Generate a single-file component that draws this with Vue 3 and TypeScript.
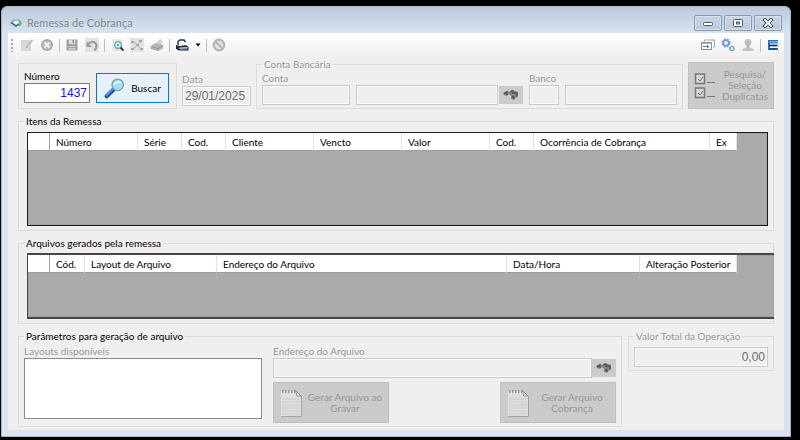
<script setup lang="ts">
import { ref } from 'vue'

interface Column {
  title: string
  width: number
}

const itemColumns: Column[] = [
  { title: '', width: 22 },
  { title: 'Número', width: 88 },
  { title: 'Série', width: 44 },
  { title: 'Cod.', width: 44 },
  { title: 'Cliente', width: 88 },
  { title: 'Vencto', width: 88 },
  { title: 'Valor', width: 88 },
  { title: 'Cod.', width: 44 },
  { title: 'Ocorrência de Cobrança', width: 176 },
  { title: 'Ex', width: 27 },
]

const fileColumns: Column[] = [
  { title: '', width: 22 },
  { title: 'Cód.', width: 35 },
  { title: 'Layout de Arquivo', width: 132 },
  { title: 'Endereço do Arquivo', width: 290 },
  { title: 'Data/Hora', width: 133 },
  { title: 'Alteração Posterior', width: 97 },
]

const numero = ref('1437')
const data = ref('29/01/2025')
const total = ref('0,00')
</script>

<template>
  <div class="desktop">
    <main class="window">
      <header class="titlebar">
        <svg class="app-icon" viewBox="0 0 12 12">
          <path d="M1 5.5 4 3h5l2 2" fill="none" stroke="#7fa9c4" stroke-width="1.2" />
          <path d="M1 5.5 6 9l3-2" fill="none" stroke="#3e6d8c" stroke-width="1.6" />
          <path d="M8.5 4 11 6.5 9 9" fill="none" stroke="#5fc04c" stroke-width="1.8" />
          <path d="M3 5.5 5 4h3l1 1.5L6 7.5z" fill="#eaf5fb" />
        </svg>
        <h1>Remessa de Cobrança</h1>
        <div class="caption-buttons">
          <button type="button" aria-label="Minimizar">
            <svg viewBox="0 0 12 10"><rect x="1.5" y="4.5" width="9" height="3" rx="1" fill="#fff" stroke="#4b5566" /></svg>
          </button>
          <button type="button" aria-label="Maximizar">
            <svg viewBox="0 0 12 10">
              <rect x="1.5" y="1.5" width="9" height="7" rx="1" fill="#fff" stroke="#4b5566" />
              <rect x="4.5" y="4" width="3" height="2" fill="#b9c8da" stroke="#4b5566" />
            </svg>
          </button>
          <button type="button" aria-label="Fechar">
            <svg viewBox="0 0 12 10">
              <path d="M3 2l6 6M9 2L3 8" stroke="#4b5566" stroke-width="3.8" stroke-linecap="square" />
              <path d="M3 2l6 6M9 2L3 8" stroke="#fff" stroke-width="1.8" stroke-linecap="square" />
            </svg>
          </button>
        </div>
      </header>

      <div class="client">
        <nav class="toolbar">
          <span class="grip"></span>
          <button type="button" disabled>
            <svg viewBox="0 0 16 16">
              <rect x="2" y="3" width="10" height="11" fill="#d8d8d8" />
              <path d="M13.500 3 8 9.500" stroke="#c2c2c2" stroke-width="2" />
              <path d="m7 11 .5-2 1.500 1z" fill="#999" />
            </svg>
          </button>
          <button type="button" disabled>
            <svg viewBox="0 0 16 16">
              <circle cx="8" cy="8" r="6" fill="#aaa" />
              <circle cx="8" cy="8" r="4.500" fill="#bcbcbc" />
              <path d="m5.500 5.500 5 5m0-5-5 5" stroke="#f2f2f2" stroke-width="2" />
            </svg>
          </button>
          <span class="sep"></span>
          <button type="button" disabled>
            <svg viewBox="0 0 16 16">
              <path d="M2.500 2.500h11v11h-11z" fill="#a2a2a2" />
              <path d="M5 2.500h6v4.500H5z" fill="#dedede" />
              <path d="M8.500 3h1.500v3H8.500z" fill="#8c8c8c" />
              <path d="M4.500 9h7v4.500h-7z" fill="#c9c9c9" />
              <path d="M4.500 10.500h7" stroke="#a5a5a5" />
            </svg>
          </button>
          <button type="button" disabled>
            <svg viewBox="0 0 16 16">
              <path d="M1 1h14v14H1z" fill="#e3e3e3" />
              <path d="M4.500 7C7 3.500 12.500 4.500 12.500 9c0 2-1 3.500-2.500 4" fill="none" stroke="#9a9a9a" stroke-width="2" />
              <path d="M2.500 4.500V10H8z" fill="#9a9a9a" />
            </svg>
          </button>
          <span class="sep"></span>
          <button type="button">
            <svg viewBox="0 0 16 16">
              <path d="M4 3h9v10H4z" fill="#f3f3f1" stroke="#d9d9d6" />
              <path d="M6 5h6M6 12h4" stroke="#c9c9c9" />
              <circle cx="9" cy="8" r="3.300" fill="#d6f1f8" stroke="#5fa9c6" stroke-width="1.300" />
              <circle cx="9" cy="8" r="1" fill="#4c8fae" />
              <path d="m11.500 10.500 3 3" stroke="#334" stroke-width="1.800" />
            </svg>
          </button>
          <button type="button" disabled>
            <svg viewBox="0 0 16 16">
              <path d="M1 1h14v14H1z" fill="#e2e2e2" />
              <path d="m4 4 8 8M12 4l-8 8" stroke="#c0c0c0" stroke-width="1.400" />
              <path d="M2 4h3v2H2zM10 3h3v2h-3zM2 11h3v2H2zM11 11h3v2h-3zM7 7h3v2H7z" fill="#a6a6a6" />
            </svg>
          </button>
          <button type="button" disabled>
            <svg viewBox="0 0 16 16">
              <path d="m7 6 4-4 3 2-3 5z" fill="#d2d2d2" />
              <path d="m1.500 9 5-3 8 2-1 4-5 2-7-2z" fill="#b4b4b4" />
              <path d="m3 10 6 1.500 4-2M9 11.500V14" fill="none" stroke="#959595" />
            </svg>
          </button>
          <span class="sep"></span>
          <button type="button">
            <svg viewBox="0 0 16 16">
              <path d="M4 8V4.500L6 3h4l1.500 2" fill="none" stroke="#30343c" stroke-width="1.500" />
              <path d="m5 6 5-1 1 3-5 1z" fill="#f6f6f6" />
              <path d="m2 8 4 1 6-1 2.500 2v3.500H5L2 12z" fill="#26303f" />
              <path d="m5.500 10.500 8-.5v1.500l-8 .5z" fill="#b7c8dd" />
              <path d="M6 13h7" stroke="#73889f" />
            </svg>
          </button>
          <button type="button" class="caret">
            <svg viewBox="0 0 8 16"><path d="M1.500 6.500h5L4 9.500z" fill="#000" /></svg>
          </button>
          <span class="sep"></span>
          <button type="button" disabled>
            <svg viewBox="0 0 16 16">
              <circle cx="8" cy="8" r="5.300" fill="#e2e2e2" stroke="#b5b5b5" stroke-width="2.200" />
              <path d="m4.500 4.500 7 7" stroke="#b5b5b5" stroke-width="2.200" />
            </svg>
          </button>
          <span class="spacer"></span>
          <button type="button">
            <svg viewBox="0 0 16 16">
              <path d="M4.500 4.500V3h10v7H13" fill="#fff" stroke="#a9a9a9" />
              <path d="M1.500 5.500h10v7h-10z" fill="#fff" stroke="#8d8d8d" />
              <path d="M2 6.500h9" stroke="#b9b9b9" />
              <path d="M3 9.500h5M7 8l2 1.500L7 11" fill="none" stroke="#3b7fd0" />
              <path d="M12.500 3h2" stroke="#e8964a" />
            </svg>
          </button>
          <button type="button">
            <svg viewBox="0 0 16 16">
              <circle cx="6" cy="6" r="3.500" fill="none" stroke="#8d9bab" stroke-width="2" stroke-dasharray="2 .8" />
              <circle cx="6" cy="6" r="2.600" fill="#eef6fd" stroke="#5b9bdc" stroke-width="1.400" />
              <circle cx="11.800" cy="11.500" r="2" fill="#fff" stroke="#78a9bd" stroke-width="1.600" />
            </svg>
          </button>
          <button type="button" disabled>
            <svg viewBox="0 0 16 16">
              <circle cx="8" cy="5.500" r="3.500" fill="#c3c3c3" />
              <path d="M6.500 8h3v2.500l4 1.500v2h-11v-2l4-1.500z" fill="#c3c3c3" />
              <path d="M8 5v6" stroke="#aaa" />
            </svg>
          </button>
          <span class="sep"></span>
          <button type="button">
            <svg viewBox="0 0 16 16">
              <path d="M3 3h10v10H3z" fill="#2c6cb8" />
              <path d="M4 4h9v1.500H4z" fill="#6fb0ec" />
              <path d="M5 6.500h9v1H5zM5 9.500h9v1.500H5z" fill="#fff" />
              <path d="M4 8h8v1H4zM4 11.500h8v1H4z" fill="#1b2c45" />
              <path d="m12.500 5 3 3-3 3z" fill="#ddd" />
            </svg>
          </button>
        </nav>

        <form class="form" @submit.prevent>
          <div class="search-row">
            <div class="panel">
              <label class="field number-field">
                <span>Número</span>
                <input v-model="numero" class="number" type="text" />
              </label>
              <button type="submit" class="search-button">
                <svg viewBox="0 0 24 24">
                  <path d="m3 21 8-8" stroke="#1c4f9e" stroke-width="4.500" stroke-linecap="round" />
                  <path d="m3 20 7-7" stroke="#4c97ea" stroke-width="2" stroke-linecap="round" />
                  <circle cx="15" cy="8.500" r="6.300" fill="#9fe0f8" stroke="#7d9db0" stroke-width="1.400" />
                  <path d="M10.500 8a5 5 0 0 1 9-1.500c-3-1-5 2-9 1.500z" fill="#e2f8ff" />
                </svg>
                <span>Buscar</span>
              </button>
            </div>

            <label class="field date-field off">
              <span>Data</span>
              <input v-model="data" class="value" type="text" disabled />
            </label>

            <fieldset class="account" disabled>
              <legend>Conta Bancária</legend>
              <div class="account-fields">
                <label class="field off"><span>Conta</span><input type="text" disabled /></label>
                <div class="lookup">
                  <input type="text" aria-label="Conta" disabled />
                  <button type="button" disabled>
                    <svg viewBox="0 0 16 12">
                      <path d="m0 4 3-2 4 1 1-2 4 1 3 1v5l-3 1-1 2-3-1V7L6 5 4 7 1 6z" fill="#858585" />
                      <path d="m1 5 3-2v3M7 3l3-1v3M11 4h3v3M9 8h2v2" fill="none" stroke="#505050" stroke-width="1.300" />
                    </svg>
                  </button>
                </div>
                <label class="field off"><span>Banco</span><input type="text" disabled /></label>
                <input type="text" aria-label="Banco" disabled />
              </div>
            </fieldset>

            <button type="button" class="gray-button select-button" disabled>
              <svg viewBox="0 0 22 28">
                <path d="M1.500 2h9v9.500h-9zM1.500 16h9v9.500h-9z" fill="#d6d6d6" stroke="#777" stroke-width="1.500" />
                <path d="m4 7 2 2 3-4M4 21l2 2 3-4" fill="none" stroke="#777" />
                <path d="M13 10.500h8M13 24.500h8" stroke="#777" />
              </svg>
              <span>Pesquisa/<br />Seleção<br />Duplicatas</span>
            </button>
          </div>

          <fieldset class="items">
            <legend>Itens da Remessa</legend>
            <div class="grid items-grid">
              <table>
                <thead>
                  <tr>
                    <th v-for="(c, i) in itemColumns" :key="i" :style="{ width: c.width + 'px' }">{{ c.title }}</th>
                  </tr>
                </thead>
              </table>
            </div>
          </fieldset>

          <fieldset class="files">
            <legend>Arquivos gerados pela remessa</legend>
            <div class="grid files-grid">
              <table>
                <thead>
                  <tr>
                    <th v-for="(c, i) in fileColumns" :key="i" :style="{ width: c.width + 'px' }">{{ c.title }}</th>
                  </tr>
                </thead>
              </table>
            </div>
          </fieldset>

          <div class="bottom-row">
            <fieldset>
              <legend>Parâmetros para geração de arquivo</legend>
              <div class="params">
                <label class="field off">
                  <span>Layouts disponíveis</span>
                  <select size="4" disabled></select>
                </label>
                <div class="address">
                  <label class="off" for="endereco">Endereço do Arquivo</label>
                  <div class="lookup">
                    <input id="endereco" type="text" disabled />
                    <button type="button" disabled>
                      <svg viewBox="0 0 16 12">
                        <path d="m0 4 3-2 4 1 1-2 4 1 3 1v5l-3 1-1 2-3-1V7L6 5 4 7 1 6z" fill="#858585" />
                        <path d="m1 5 3-2v3M7 3l3-1v3M11 4h3v3M9 8h2v2" fill="none" stroke="#505050" stroke-width="1.300" />
                      </svg>
                    </button>
                  </div>
                  <div class="actions">
                    <button type="button" class="gray-button action" disabled>
                      <svg viewBox="0 0 24 30">
                        <path d="M2 3h15l5 5v20H2z" fill="#dedede" />
                        <path d="M22.500 8v20.500H2" fill="none" stroke="#a3a3a3" />
                        <path d="M3 11h18M3 14h18M3 17h18M3 20h18M3 23h18M3 26h18" stroke="#cbcbcb" />
                        <path d="M3 3.500h13" stroke="#999" stroke-width="3" stroke-dasharray="1.500 1.500" />
                        <path d="M16.500 2.500 22 8h-4z" fill="#f3f3f3" stroke="#909090" />
                      </svg>
                      <span>Gerar Arquivo ao<br />Gravar</span>
                    </button>
                    <button type="button" class="gray-button action" disabled>
                      <svg viewBox="0 0 24 30">
                        <path d="M2 3h15l5 5v20H2z" fill="#dedede" />
                        <path d="M22.500 8v20.500H2" fill="none" stroke="#a3a3a3" />
                        <path d="M3 11h18M3 14h18M3 17h18M3 20h18M3 23h18M3 26h18" stroke="#cbcbcb" />
                        <path d="M3 3.500h13" stroke="#999" stroke-width="3" stroke-dasharray="1.500 1.500" />
                        <path d="M16.500 2.500 22 8h-4z" fill="#f3f3f3" stroke="#909090" />
                      </svg>
                      <span>Gerar Arquivo<br />Cobrança</span>
                    </button>
                  </div>
                </div>
              </div>
            </fieldset>

            <fieldset class="total" disabled>
              <legend>Valor Total da Operação</legend>
              <input v-model="total" class="value right" type="text" aria-label="Valor Total da Operação" disabled />
            </fieldset>
          </div>
        </form>
      </div>
    </main>
  </div>
</template>

<style>
body {
  margin: 0;
  background: #000;
}
</style>

<style scoped>
* {
  box-sizing: border-box;
}

.desktop {
  display: flex;
  min-height: 100vh;
  padding: 6px 9px 3px 1px;
  background: #000;
  font: 10px/14px Lato, "Liberation Sans", sans-serif;
  color: #000;
}

.window {
  display: flex;
  flex: 1;
  min-width: 0;
  flex-direction: column;
  padding: 0 6px 6px;
  border: 1px solid #a9b7c6;
  border-radius: 6px 6px 0 0;
  background: linear-gradient(#bccad9, #d7e4f2 27px);
}

.titlebar {
  display: flex;
  height: 26px;
  align-items: center;
}

.app-icon {
  width: 12px;
  height: 12px;
  margin: 6px 5px 0 2px;
}

h1 {
  flex: 1;
  margin: 6px 0 0;
  font-size: 11px;
  font-weight: 400;
  color: #858a90;
}

.caption-buttons {
  display: flex;
  gap: 2px;
  margin: 5px 2px 0 0;
}

button {
  display: flex;
  align-items: center;
  justify-content: center;
  padding: 0;
  border: 0;
  background: none;
  font: inherit;
  color: inherit;
}

.caption-buttons button {
  width: 28px;
  height: 16px;
  border: 1px solid #8799b3;
  border-radius: 2px;
  background: linear-gradient(#c9d6e4, #bccadb);
  box-shadow: inset 0 0 0 1px #d6e1ed;
}

.caption-buttons svg {
  width: 12px;
  height: 10px;
}

.client {
  display: flex;
  flex: 1;
  flex-direction: column;
  background: #efefef;
}

.toolbar {
  display: flex;
  height: 24px;
  align-items: center;
  gap: 4px;
  padding: 0 3px;
  background: linear-gradient(#fff, #f0f0f0);
}

.toolbar button,
.toolbar svg {
  width: 16px;
  height: 16px;
}

.toolbar .caret,
.toolbar .caret svg {
  width: 8px;
}

.grip {
  width: 4px;
  height: 14px;
  background: radial-gradient(circle at 1px 1px, #a9a9a9 1px, transparent 1px) 0 1px / 4px 4px;
}

.sep {
  width: 1px;
  height: 13px;
  background: #bdbdbd;
}

.spacer {
  flex: 1;
}

.form {
  display: flex;
  flex: 1;
  flex-direction: column;
  gap: 5px;
  padding: 0 10px 3px;
}

.search-row {
  display: grid;
  grid-template-columns: 159px 69px 1fr 86px;
  align-items: end;
  gap: 5px;
}

.panel {
  display: flex;
  height: 46px;
  align-items: end;
  gap: 6px;
  padding: 5px;
  border: 1px solid #dcdcdc;
}

fieldset {
  min-width: 0;
  margin: 0;
  padding: 0 5px 3px;
  border: 1px solid #dcdcdc;
}

legend {
  padding: 0 2px;
}

fieldset:disabled,
.off {
  color: #9a9a9a;
}

.field {
  display: flex;
  flex-direction: column;
  min-width: 0;
}

input {
  width: 100%;
  min-width: 0;
  height: 20px;
  padding: 0 2px;
  border: 1px solid #cacaca;
  outline: 0;
  background: #efefef;
  box-shadow: inset 0 0 0 1px #f8f8f8;
  font: inherit;
  color: #6d6d6d;
}

.number-field {
  width: 66px;
}

.number,
.value {
  font-family: "Liberation Sans", Arial, sans-serif;
  font-size: 12px;
}

.number {
  border-color: #7a7a7a;
  background: #fff;
  text-align: right;
  color: #1414e6;
}

.right {
  text-align: right;
}

.search-button {
  width: 73px;
  height: 30px;
  gap: 5px;
  border: 1px solid #0078d7;
  background: #e5f1fb;
}

.search-button svg {
  width: 22px;
  height: 22px;
}

.date-field {
  padding-bottom: 3px;
}

.account-fields {
  display: grid;
  grid-template-columns: 88px 1fr 30px 112px;
  align-items: end;
  gap: 6px;
}

.lookup {
  display: flex;
  align-items: center;
  gap: 1px;
}

.lookup button {
  width: 24px;
  height: 18px;
  flex: none;
  background: #cbcbcb;
}

.lookup svg {
  width: 16px;
  height: 12px;
}

.gray-button {
  border: 1px solid #bfbfbf;
  background: #cbcbcb;
  line-height: 11px;
  color: #989898;
}

.select-button {
  height: 47px;
  gap: 6px;
}

.select-button svg {
  width: 22px;
  height: 28px;
}

.items,
.files {
  display: flex;
  flex: 1 0 auto;
  flex-direction: column;
}

.grid {
  flex: 1;
  margin: 4px 0 1px 3px;
  overflow: hidden;
  border: 1px solid #1c1c1c;
  background: #ababab;
  box-shadow: inset 0 0 0 1px #a0a0a0;
}

.items-grid {
  min-height: 94px;
}

.files-grid {
  min-height: 66px;
  margin-top: 3px;
  margin-right: -6px;
  border-width: 2px 0 2px 1px;
  border-color: #4a4648;
}

table {
  border-collapse: separate;
  border-spacing: 0;
}

th {
  height: 18px;
  padding: 0 0 0 6px;
  border-right: 1px solid #e2e2e2;
  border-bottom: 1px solid #9c9c9c;
  background: #fff;
  font-weight: 400;
  text-align: left;
  white-space: nowrap;
}

th:first-child {
  border-right-color: #a0a0a0;
}

.bottom-row {
  display: grid;
  grid-template-columns: 1fr 146px;
  align-items: start;
  gap: 6px;
}

.params {
  display: grid;
  grid-template-columns: 238px 1fr;
  gap: 11px;
  padding-top: 1px;
}

select {
  width: 100%;
  height: 61px;
  border: 1px solid #868b94;
  border-radius: 0;
  background: #fff;
  opacity: 1;
}

.address {
  display: flex;
  flex-direction: column;
}

.address .lookup {
  gap: 0;
}

.actions {
  display: flex;
  justify-content: space-between;
  padding-top: 4px;
}

.action {
  width: 116px;
  height: 41px;
  gap: 4px;
}

.action svg {
  width: 24px;
  height: 30px;
}

.action span {
  width: 76px;
}

.total input {
  margin-top: 4px;
}
</style>
